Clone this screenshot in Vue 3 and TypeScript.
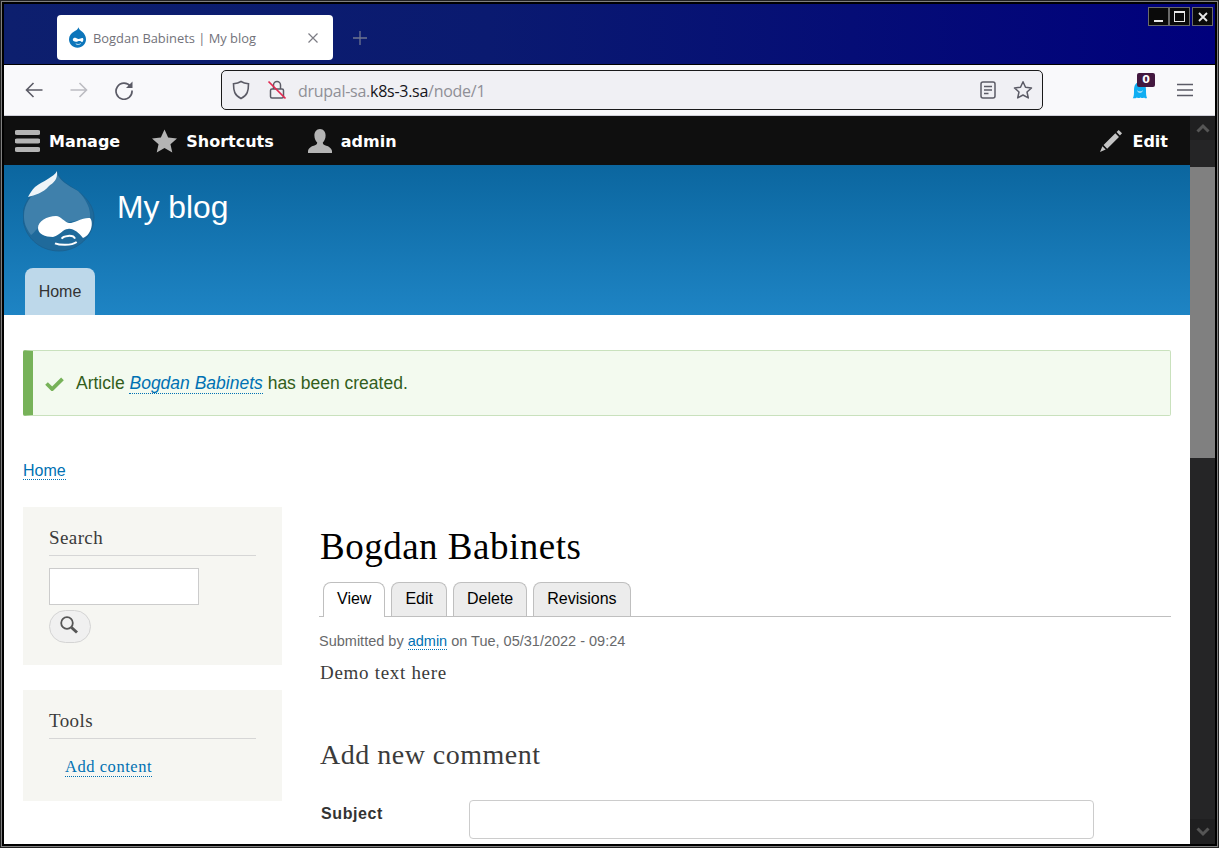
<script setup lang="ts">
const tabs: { label: string; active?: boolean }[] = [
  { label: 'View', active: true },
  { label: 'Edit' },
  { label: 'Delete' },
  { label: 'Revisions' },
]
</script>

<template>
  <div class="window">
    <header class="titlebar">
      <div class="browser-tab">
        <svg class="favicon" viewBox="0 0 72 84" width="19" height="21">
          <path d="M40 1c1 8 8 12 15 18 9 8 15 18 15 30 0 19-15 34-34 34S2 68 2 49c0-14 9-24 19-30 9-5 16-9 19-18z" fill="#0d76bb" />
          <path d="M20 56c-6-5-1-14 7-13 6 1 9 6 14 5 6-1 11-6 16-4 5 3 2 14-3 17-4-5-11-7-16-4-6 3-12 3-18-1z" fill="#fff" />
          <path d="M29 67c6 4 14 4 20-1" stroke="#fff" stroke-width="3" fill="none" />
        </svg>
        <span class="tab-title">Bogdan Babinets | My blog</span>
        <svg class="tab-close" viewBox="0 0 12 12" width="12" height="12"><path d="M1.500 1.500l9 9M10.500 1.500l-9 9" stroke="#7c7c84" stroke-width="1.200" /></svg>
      </div>
      <svg class="new-tab" viewBox="0 0 16 16" width="16" height="16"><path d="M8 1v14M1 8h14" stroke="#6f7590" stroke-width="1.300" /></svg>
      <div class="win-controls">
        <span class="win-btn"><i class="min"></i></span>
        <span class="win-btn"><i class="max"></i></span>
        <span class="win-btn">
          <svg viewBox="0 0 10 10" width="10" height="10"><path d="M1 1l8 8M9 1l-8 8" stroke="#e8e8e8" stroke-width="1.800" /></svg>
        </span>
      </div>
    </header>

    <nav class="toolbar">
      <svg class="nav-icon" viewBox="0 0 20 20" width="20" height="20"><path d="M18.500 10H2.500M9.500 3l-7 7 7 7" fill="none" stroke="#5b5b66" stroke-width="1.600" /></svg>
      <svg class="nav-icon" viewBox="0 0 20 20" width="20" height="20"><path d="M1.500 10h16M10.500 3l7 7-7 7" fill="none" stroke="#bcbcc2" stroke-width="1.600" /></svg>
      <svg class="nav-icon" viewBox="0 0 20 20" width="20" height="20"><path d="M16.500 6.500A8 8 0 1 0 18 10.500" fill="none" stroke="#5b5b66" stroke-width="1.700" /><path d="M18.500 1.500v6.500h-6.500z" fill="#5b5b66" /></svg>
      <div class="urlbar">
        <svg class="shield" viewBox="0 0 18 20" width="18" height="20"><path d="M9 1.500c2.500 1.500 5 2 7.500 2.300 0 7-1 11.700-7.500 14.700C2.500 15.500 1.500 10.800 1.500 3.800 4 3.500 6.500 3 9 1.500z" fill="none" stroke="#5b5b66" stroke-width="1.600" /></svg>
        <svg class="lock" viewBox="0 0 20 20" width="20" height="20">
          <path d="M6.500 9V5a3.500 3.500 0 0 1 7 0v4M3.500 10.500a1.500 1.500 0 0 1 1.500-1.500h10a1.500 1.500 0 0 1 1.500 1.500v6a1.500 1.500 0 0 1-1.500 1.500H5a1.500 1.500 0 0 1-1.500-1.500z" fill="none" stroke="#5b5b66" stroke-width="1.500" />
          <path d="M1.500 1.500l17 17" stroke="#e22850" stroke-width="1.700" />
        </svg>
        <span class="url"><span class="dim">drupal-sa.</span>k8s-3.sa<span class="dim">/node/1</span></span>
        <svg class="reader" viewBox="0 0 16 18" width="16" height="18"><rect x="1" y="1" width="14" height="16" rx="2" fill="none" stroke="#5b5b66" stroke-width="1.500" /><path d="M4 5.500h8M4 9h8M4 12.500h4.500" stroke="#5b5b66" stroke-width="1.400" /></svg>
        <svg class="bookmark" viewBox="0 0 20 20" width="20" height="20"><path d="M10 1.800l2.500 5.500 6 .7-4.500 4 1.300 5.900L10 15l-5.300 2.900L6 12 1.500 8l6-.7z" fill="none" stroke="#5b5b66" stroke-width="1.500" stroke-linejoin="round" /></svg>
      </div>
      <div class="ext">
        <svg viewBox="0 0 16 20" width="16" height="20"><path d="M1 18c1-2 1-5 1-8C2 5 4 2 8 2s6 3 6 8c0 3 0 6 1 8-1 .6-2 .2-3-.6-1 .8-2 .8-3.500 0-1.500.8-2.500.8-3.500 0-1 .8-3.500 1.200-4.500.6z" fill="#10aef2" /><path d="M5.500 11c1 1.500 4 1.500 5 0" stroke="#fff" stroke-width="1" fill="none" /></svg>
        <b class="badge">0</b>
      </div>
      <svg class="menu" viewBox="0 0 16 14" width="16" height="14"><path d="M0 1.500h16M0 7h16M0 12.500h16" stroke="#5b5b66" stroke-width="1.500" /></svg>
    </nav>

    <div class="viewport">
      <main class="page">
        <div class="adminbar">
          <a class="admin-item">
            <svg viewBox="0 0 25 24" width="25" height="24"><path d="M2 3.500h21M2 12h21M2 20.500h21" stroke="#b4b4b4" stroke-width="5" stroke-linecap="round" /></svg>
            Manage
          </a>
          <a class="admin-item">
            <svg viewBox="0 0 26 24" width="25" height="24"><path d="M13 0l3.800 8.300 9.200 1-6.800 6 1.900 8.700-8.100-4.600-8.100 4.600 1.900-8.700-6.800-6 9.200-1z" fill="#b4b4b4" /></svg>
            Shortcuts
          </a>
          <a class="admin-item user">
            <svg viewBox="0 0 24 24" width="24" height="24"><path d="M12 0c3.700 0 5.600 3 5.600 6.500 0 3-1.200 5.500-2.800 7 .1 1.400.6 2.100 2.200 2.700 3.200 1.100 6.200 2.100 7 5.800v2H0v-2c.8-3.700 3.800-4.700 7-5.800 1.600-.6 2.100-1.300 2.200-2.700-1.600-1.500-2.800-4-2.800-7C6.400 3 8.300 0 12 0z" fill="#b4b4b4" /></svg>
            admin
          </a>
          <a class="admin-item edit">
            <svg viewBox="0 0 24 24" width="23" height="23"><path d="M19.500 1l3.500 3.500-2.200 2.200-3.500-3.500zM16 4.500l3.800 3.800L7.500 20.500l-3.800-3.800zM2.500 18l3.500 3.500L0 24z" fill="#c4c4c4" /></svg>
            Edit
          </a>
        </div>

        <div class="site-header">
          <div class="branding">
            <svg class="logo" viewBox="0 0 72 81" width="72" height="81">
              <path d="M34 0C36 8 42 12 50 17 62 24 71 35 71 46 71 65 55 80 36 80 16 80 0 65 0 45 0 33 7 24 16 17 24 12 32 8 34 0z" fill="#1f6a9b" stroke="#1a5f8e" stroke-width=".8" />
              <path d="M34 2C36 9 44 14 55 20 63 28 68 38 67 47L15 57C12 60 9 64 8 64 2 56 1 50 1 45 1 33 8 24 17 18 25 12 32 8 34 2z" fill="#3f80ab" />
              <path d="M34 0C31 6 20 10 12 16 9 19 7 22 5 26 12 24 20 22 26 15 30 12 35 9 34 0z" fill="#eef4f8" />
              <path d="M15 57C15 50 24 45 33 45 38 45 41 51 46 52 52 52 60 46 67 47 70 50 69 58 66 62 64 65 62 66 60 67 56 62 50 57 45 58 40 58 36 65 30 66 22 66 15 63 15 57z" fill="#fff" />
              <path d="M32 72.300C36 74 48 75 53.700 71M38.700 67.700C40 65 50 63 52 67.700" fill="none" stroke="#fff" stroke-width="2" />
            </svg>
            <h1 class="site-name">My blog</h1>
          </div>
          <div class="primary-nav"><a class="home-tab">Home</a></div>
        </div>

        <div class="content">
          <div class="message">
            <svg viewBox="0 0 20 16" width="19" height="15"><path d="M1.500 8l6 6L18.500 3" fill="none" stroke="#77b259" stroke-width="4" /></svg>
            <p>Article <a class="link"><em>Bogdan Babinets</em></a> has been created.</p>
          </div>

          <div class="breadcrumb"><a class="link">Home</a></div>

          <div class="columns">
            <aside class="sidebar">
              <section class="block search-block">
                <h2 class="block-title">Search</h2>
                <div class="search-input"></div>
                <button class="search-btn" type="button" aria-label="Search">
                  <svg viewBox="0 0 20 20" width="20" height="20"><circle cx="8" cy="8" r="5.800" fill="none" stroke="#555" stroke-width="1.800" /><path d="M12.500 12.500l5.500 5" stroke="#555" stroke-width="3" /></svg>
                </button>
              </section>
              <section class="block tools-block">
                <h2 class="block-title">Tools</h2>
                <a class="link serif-link">Add content</a>
              </section>
            </aside>

            <article class="main">
              <h1 class="page-title">Bogdan Babinets</h1>
              <ul class="tabs">
                <li v-for="t in tabs" :key="t.label" :class="['tab', { active: t.active }]">{{ t.label }}</li>
              </ul>
              <p class="submitted">Submitted by <a class="link">admin</a> on Tue, 05/31/2022 - 09:24</p>
              <p class="body-text">Demo text here</p>
              <h2 class="comment-title">Add new comment</h2>
              <div class="field">
                <label class="field-label">Subject</label>
                <div class="field-input"></div>
              </div>
            </article>
          </div>
        </div>
      </main>

      <div class="scrollbar">
        <div class="sb-btn"><svg viewBox="0 0 14 10" width="14" height="10"><path d="M1.500 8.500L7 3l5.500 5.500" fill="none" stroke="#555" stroke-width="3" /></svg></div>
        <div class="sb-gap"></div>
        <div class="sb-thumb"></div>
        <div class="sb-rest"></div>
        <div class="sb-btn last"><svg viewBox="0 0 14 10" width="14" height="10"><path d="M1.500 1.500L7 7l5.500-5.500" fill="none" stroke="#555" stroke-width="3" /></svg></div>
      </div>
    </div>
  </div>
</template>

<style>
html, body { margin: 0; padding: 0; overflow: hidden; background: #000; }
</style>

<style scoped>
* { box-sizing: border-box; }
.window {
  width: 1219px;
  height: 848px;
  background: #000;
  border: 1px solid #222;
  box-shadow: inset 0 0 0 1px #808080;
  padding: 3px;
  display: flex;
  flex-direction: column;
  overflow: hidden;
  position: relative;
  font-family: "Liberation Sans", Arial, sans-serif;
}
.titlebar {
  height: 60px;
  flex: none;
  display: flex;
  align-items: flex-start;
  background: linear-gradient(90deg, #0d1f6e 0%, #0a1a70 40%, #00007c 100%);
  padding: 11px 0 0 53px;
}
.browser-tab {
  width: 276px;
  height: 45px;
  background: #fff;
  border-radius: 4px;
  display: flex;
  align-items: center;
  padding: 0 14px 0 11px;
}
.favicon { flex: none; margin-right: 6px; }
.tab-title {
  flex: 1;
  font: 12.900px "Open Sans", sans-serif;
  color: #72727a;
}
.new-tab { margin: 15px 0 0 19px; }
.win-controls {
  position: absolute;
  top: 6px;
  right: 5px;
  display: flex;
}
.win-btn {
  width: 21px;
  height: 19px;
  background: #0a0a0a;
  border: 1px solid #6a6a6a;
  display: flex;
  align-items: center;
  justify-content: center;
}
.win-btn:last-child { margin-left: 2px; }
.win-btn .min { width: 9px; height: 2px; background: #e8e8e8; margin-top: 9px; }
.win-btn .max { width: 11px; height: 11px; border: 1px solid #e8e8e8; border-top-width: 2px; }

.toolbar {
  height: 51px;
  flex: none;
  margin-top: 1px;
  background: #f9f9fb;
  border-bottom: 1px solid #cfcfd8;
  display: flex;
  align-items: center;
  padding-left: 20px;
}
.nav-icon { margin-right: 25px; flex: none; }
.urlbar {
  width: 822px;
  height: 40px;
  margin-left: 62px;
  background: #f0f0f4;
  border: 1px solid #1a1a1a;
  border-radius: 5px;
  display: flex;
  align-items: center;
  padding-left: 10px;
}
.shield { flex: none; }
.lock { flex: none; margin-left: 17px; }
.url {
  flex: 1;
  margin-left: 11px;
  padding-top: 1px;
  font: 16px "Open Sans", sans-serif;
  color: #15141a;
  letter-spacing: -0.27px;
}
.dim { color: #8f8f96; }
.reader { flex: none; margin-right: 17px; }
.bookmark { flex: none; margin-right: 9px; }
.ext { position: relative; width: 16px; height: 20px; margin-left: 89px; flex: none; }
.badge {
  position: absolute;
  left: 5px;
  top: -7px;
  width: 18px;
  height: 14px;
  background: #43183f;
  border-radius: 2px;
  color: #fff;
  font: bold 11px/14px "DejaVu Sans", sans-serif;
  text-align: center;
}
.menu { margin-left: 29px; flex: none; }

.viewport { flex: 1; min-height: 0; display: flex; }
.page { flex: 1; min-width: 0; background: #fff; overflow: hidden; }
.adminbar {
  height: 49px;
  background: #0f0f0f;
  display: flex;
  align-items: center;
  padding: 2px 22px 0 11px;
  gap: 32px;
}
.admin-item {
  display: flex;
  align-items: center;
  gap: 9px;
  color: #fff;
  font: bold 16px "DejaVu Sans", sans-serif;
}
.admin-item svg { margin-bottom: 2px; }
.admin-item.user { margin-left: 2px; }
.admin-item.edit { margin-left: auto; }
.site-header {
  height: 150px;
  background: linear-gradient(180deg, #0b669f 0%, #1e84c4 100%);
  padding-left: 19px;
  display: flex;
  flex-direction: column;
  justify-content: space-between;
}
.branding { display: flex; align-items: flex-start; padding-top: 6px; }
.logo { flex: none; }
.site-name {
  margin: 16px 0 0 22px;
  font: 400 31.800px/40px "Liberation Sans", sans-serif;
  color: #fff;
}
.primary-nav { padding-left: 2px; }
.home-tab {
  display: block;
  width: 70px;
  height: 47px;
  background: #bdd8ea;
  border-radius: 8px 8px 0 0;
  color: #333;
  font-size: 16px;
  line-height: 48px;
  text-align: center;
}
.content { padding: 35px 19px 0 19px; }
.message {
  height: 66px;
  background: #f3faef;
  border: 1px solid #c9e1bd;
  border-left: 10px solid #77b259;
  border-radius: 2px;
  display: flex;
  align-items: center;
  gap: 12px;
  padding-left: 12px;
  color: #325e1c;
  font-size: 17.500px;
}
.message p { margin: 0; }
.link {
  color: #0071b3;
  border-bottom: 1px dotted #0071b3;
}
.breadcrumb { margin-top: 45px; font-size: 16px; line-height: 20px; color: #0071b3; }
.columns { display: flex; margin-top: 26px; }
.sidebar { width: 259px; flex: none; }
.block { background: #f6f6f2; padding: 0 26px; }
.search-block { height: 158px; padding-top: 19px; }
.tools-block { height: 111px; margin-top: 25px; padding-top: 19px; }
.block-title {
  margin: 0;
  height: 30px;
  font: 400 19px/24px "Liberation Serif", serif;
  letter-spacing: .4px;
  color: #3b3b3b;
  border-bottom: 1px solid #d6d6d6;
}
.search-input {
  width: 150px;
  height: 37px;
  margin-top: 12px;
  background: #fff;
  border: 1px solid #ccc;
}
.search-btn {
  display: flex;
  align-items: center;
  justify-content: center;
  width: 42px;
  height: 33px;
  margin-top: 5px;
  padding: 0;
  background: #f0f0f0;
  border: 1px solid #d4d4d4;
  border-radius: 20px;
}
.search-btn svg { margin: 0 2px 3px 0; }
.serif-link {
  display: inline-block;
  margin: 19px 0 0 16px;
  font: 16.500px/18px "Liberation Serif", serif;
  letter-spacing: .55px;
}
.main { flex: 1; min-width: 0; padding-left: 37px; }
.page-title {
  margin: 16px 0 0 1px;
  font: 400 37px/48px "Liberation Serif", serif;
  letter-spacing: .5px;
  color: #000;
}
.tabs {
  list-style: none;
  margin: 11px 0 0;
  padding: 0 0 0 4px;
  display: flex;
  gap: 6px;
  border-bottom: 1px solid #bfbfbf;
  height: 35px;
}
.tab {
  height: 34px;
  padding: 0 13px;
  background: #ececec;
  border: 1px solid #bfbfbf;
  border-bottom: 0;
  border-radius: 8px 8px 0 0;
  font-size: 16px;
  line-height: 32px;
  color: #000;
}
.tab.active { background: #fff; height: 35px; }
.submitted { margin: 15px 0 0; font-size: 14.500px; line-height: 18px; color: #68696b; }
.body-text { margin: 12px 0 0 1px; font: 19px/22px "Liberation Serif", serif; letter-spacing: .7px; color: #3b3b3b; }
.comment-title { margin: 53px 0 0 1px; font: 400 28px/36px "Liberation Serif", serif; letter-spacing: .5px; color: #3b3b3b; }
.field { display: flex; margin-top: 27px; padding-left: 1px; }
.field-label { width: 149px; padding-left: 1px; font: bold 16px/28px "Liberation Sans", sans-serif; color: #333; letter-spacing: .6px; }
.field-input { width: 625px; height: 39px; border: 1px solid #ccc; border-radius: 4px; background: #fff; }

.scrollbar { width: 25px; flex: none; display: flex; flex-direction: column; background: #252526; }
.sb-btn { height: 24px; flex: none; background: #1f1f20; display: flex; align-items: center; justify-content: center; }
.sb-btn.last { height: 25px; }
.sb-gap { height: 27px; flex: none; }
.sb-thumb { height: 291px; flex: none; background: #808080; }
.sb-rest { flex: 1; }
</style>
